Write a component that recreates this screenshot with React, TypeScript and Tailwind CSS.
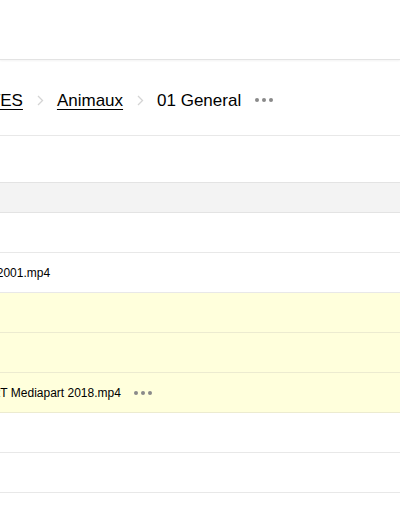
// File browser, scrolled sideways: breadcrumb plus a list of video files.

const ROWS: { name?: string; highlight?: boolean; menu?: boolean }[] = [
  {},
  { name: "Reportage Animaux 2001.mp4" },
  { highlight: true },
  { highlight: true },
  { name: "REPORTAGE ART Mediapart 2018.mp4", highlight: true, menu: true },
  {},
  {},
  {},
];

function Dots({ className = "" }: { className?: string }) {
  return (
    <span className={`flex items-center gap-[3px] ${className}`}>
      <span className="h-[4px] w-[4px] rounded-full bg-[#8a8a8a]" />
      <span className="h-[4px] w-[4px] rounded-full bg-[#8a8a8a]" />
      <span className="h-[4px] w-[4px] rounded-full bg-[#8a8a8a]" />
    </span>
  );
}

function Chevron() {
  return (
    <svg width="7" height="11" viewBox="0 0 7 11" className="shrink-0">
      <path d="M1 1l4.5 4.5L1 10" fill="none" stroke="#d4d4d4" strokeWidth="1.3" />
    </svg>
  );
}

export default function App() {
  return (
    <div className="h-[516px] w-[400px] overflow-hidden bg-white font-['Liberation_Sans',Arial,sans-serif] text-black">
      <div className="h-[60px] border-b border-[#e3e3e3] shadow-[0_1px_2px_rgba(0,0,0,0.05)]" />

      <div className="flex h-[76px] items-center overflow-hidden border-b border-[#e8e8e8] pt-[5px]">
        <div className="-ml-[64px] flex shrink-0 items-center text-[17px] leading-none">
          <span className="underline underline-offset-[3px]">ARCHIVES</span>
          <span className="ml-[14px] mr-[13px]"><Chevron /></span>
          <span className="underline underline-offset-[3px]">Animaux</span>
          <span className="ml-[14px] mr-[13px]"><Chevron /></span>
          <span>01 General</span>
          <Dots className="ml-[14px]" />
        </div>
      </div>

      <div className="h-[46px]" />
      <div className="h-[31px] border-y border-[#e3e3e3] bg-[#f3f3f3]" />

      {ROWS.map((r, i) => (
        <div
          key={i}
          className={`flex h-[40px] items-center overflow-hidden border-b ${r.highlight ? "border-[#ecebd0] bg-[#ffffdc]" : "border-[#e8e8e8] bg-white"}`}
        >
          {r.name && (
            <div className="flex shrink-0 items-center text-[12px] leading-none">
              <span className={r.menu ? "-ml-[93px]" : "-ml-[112px]"}>{r.name}</span>
              {r.menu && <Dots className="ml-[13px]" />}
            </div>
          )}
        </div>
      ))}
    </div>
  );
}
